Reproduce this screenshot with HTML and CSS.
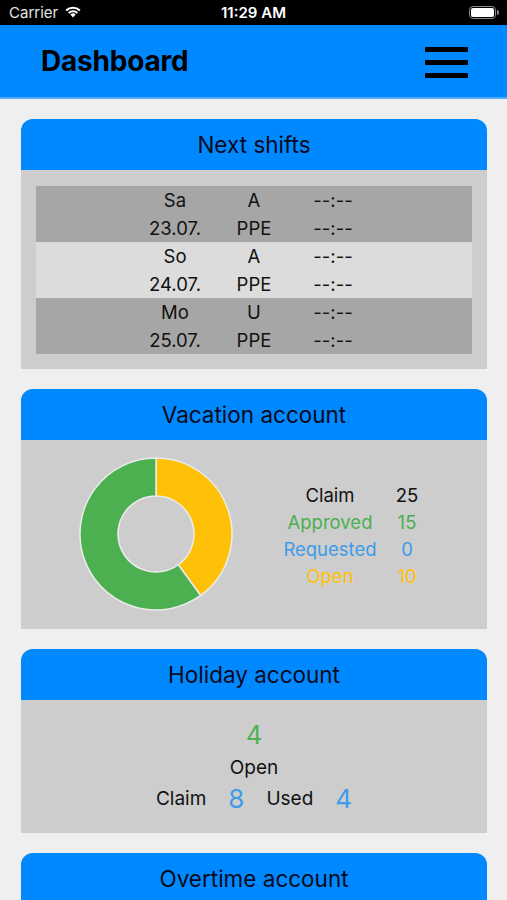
FILE: index.html
```html
<!DOCTYPE html>
<html lang="en">

<head>
    <meta charset="UTF-8">
    <title>Dashboard</title>
    <link rel="stylesheet" href="styles.css">
</head>

<body>

    <div class="status-bar">
        <div class="carrier">
            Carrier
            <svg class="wifi" width="18" height="13" viewBox="0 0 18 13">
                <path d="M9 12.5 L6.3 9.6 A4 4 0 0 1 11.7 9.6 Z" fill="#fff" />
                <path d="M3.9 7.2 A7.4 7.4 0 0 1 14.1 7.2 L12.6 8.7 A5.3 5.3 0 0 0 5.4 8.7 Z" fill="#fff" />
                <path d="M1.4 4.7 A11 11 0 0 1 16.6 4.7 L15.1 6.2 A8.9 8.9 0 0 0 2.9 6.2 Z" fill="#fff" />
            </svg>
        </div>
        <div class="clock">11:29 AM</div>
        <div class="battery">
            <div class="battery-body"><div class="battery-fill"></div></div>
            <div class="battery-tip"></div>
        </div>
    </div>

    <header class="navbar">
        <h1>Dashboard</h1>
        <button class="menu-btn" aria-label="Menu">
            <span></span><span></span><span></span>
        </button>
    </header>

    <main class="content">

        <section class="card">
            <div class="card-title">Next shifts</div>
            <div class="card-body shifts-body">
                <div class="shift dark">
                    <span>Sa</span><span>A</span><span>--:--</span>
                    <span>23.07.</span><span>PPE</span><span>--:--</span>
                </div>
                <div class="shift light">
                    <span>So</span><span>A</span><span>--:--</span>
                    <span>24.07.</span><span>PPE</span><span>--:--</span>
                </div>
                <div class="shift dark">
                    <span>Mo</span><span>U</span><span>--:--</span>
                    <span>25.07.</span><span>PPE</span><span>--:--</span>
                </div>
            </div>
        </section>

        <section class="card">
            <div class="card-title">Vacation account</div>
            <div class="card-body vacation-body">
                <svg class="donut" width="156" height="156" viewBox="-1 -1 156 156">
                    <path class="slice-open" d="M77 1 A76 76 0 0 1 121.67 138.48 L99.34 107.74 A38 38 0 0 0 77 39 Z" />
                    <path class="slice-approved" d="M121.67 138.48 A76 76 0 1 1 77 1 L77 39 A38 38 0 1 0 99.34 107.74 Z" />
                </svg>
                <div class="legend">
                    <span class="claim">Claim</span><span class="claim">25</span>
                    <span class="approved">Approved</span><span class="approved">15</span>
                    <span class="requested">Requested</span><span class="requested">0</span>
                    <span class="open">Open</span><span class="open">10</span>
                </div>
            </div>
        </section>

        <section class="card">
            <div class="card-title">Holiday account</div>
            <div class="card-body holiday-body">
                <div class="holiday-open">4</div>
                <div class="holiday-label">Open</div>
                <div class="holiday-row">
                    <span>Claim</span><span class="big-num">8</span>
                    <span>Used</span><span class="big-num">4</span>
                </div>
            </div>
        </section>

        <section class="card">
            <div class="card-title">Overtime account</div>
            <div class="card-body holiday-body"></div>
        </section>

    </main>

</body>

</html>
```

FILE: styles.css
```css
body {
    margin: 0;
    font-family: Inter, "Noto Sans", sans-serif;
    background: #efefef;
    color: #111;
    width: 507px;
    overflow: hidden;
}

.status-bar {
    height: 25px;
    background: #000;
    color: #fff;
    display: flex;
    align-items: center;
    justify-content: space-between;
    padding: 0 8px 0 9px;
    font-size: 15px;
    position: relative;
}

.carrier {
    display: flex;
    align-items: center;
    gap: 6px;
    color: #e6e6e6;
}

.wifi {
    margin-top: -2px;
}

.clock {
    position: absolute;
    left: 0;
    right: 0;
    text-align: center;
    font-weight: 600;
}

.battery {
    display: flex;
    align-items: center;
}

.battery-body {
    width: 23px;
    height: 9px;
    border: 1.5px solid #8a8a8a;
    border-radius: 4px;
    padding: 1px;
}

.battery-fill {
    width: 100%;
    height: 100%;
    background: #fff;
    border-radius: 2px;
}

.battery-tip {
    width: 2px;
    height: 5px;
    background: #8a8a8a;
    border-radius: 0 2px 2px 0;
    margin-left: 1px;
}

.navbar {
    height: 72px;
    background: #0088ff;
    border-bottom: 2px solid #56acfb;
    display: flex;
    align-items: center;
    justify-content: space-between;
    padding: 0 39px 0 41px;
}

.navbar h1 {
    margin: 0;
    font-size: 28px;
    font-weight: 700;
    color: #000;
    letter-spacing: -0.2px;
}

.menu-btn {
    background: none;
    border: none;
    padding: 0;
    display: flex;
    flex-direction: column;
    gap: 8px;
    cursor: pointer;
    margin-top: 2px;
}

.menu-btn span {
    display: block;
    width: 43px;
    height: 5px;
    background: #000;
    border-radius: 1px;
}

.content {
    padding: 20px 20px 0 21px;
    display: flex;
    flex-direction: column;
    gap: 20px;
}

.card {
    background: #cdcdcd;
    border-radius: 12px 12px 0 0;
    overflow: hidden;
}

.card-title {
    height: 51px;
    background: #0088ff;
    display: flex;
    align-items: center;
    justify-content: center;
    font-size: 22.5px;
    color: #0a0a1a;
}

.shifts-body {
    padding: 16px 15px 15px;
}

.shift {
    display: grid;
    grid-template-columns: 79px 79px 79px;
    justify-content: center;
    grid-auto-rows: 28px;
    align-items: center;
    text-align: center;
    font-size: 18.5px;
}

.shift.dark {
    background: #a6a6a6;
}

.shift.light {
    background: #dcdcdc;
}

.vacation-body {
    display: flex;
    align-items: center;
    padding: 16px 0 17px 57px;
    gap: 46px;
}

.slice-open {
    fill: #ffc107;
    stroke: #ececec;
    stroke-width: 1.5;
}

.slice-approved {
    fill: #4caf50;
    stroke: #ececec;
    stroke-width: 1.5;
}

.legend {
    display: grid;
    grid-template-columns: 100px 54px;
    grid-auto-rows: 27px;
    align-items: center;
    text-align: center;
    font-size: 18.5px;
    margin-top: 3px;
}

.claim {
    color: #111;
}

.approved {
    color: #4caf50;
}

.requested {
    color: #3d9be9;
}

.open {
    color: #ffc107;
}

.holiday-body {
    height: 133px;
    display: flex;
    flex-direction: column;
    align-items: center;
    padding-top: 20px;
    box-sizing: border-box;
}

.holiday-open {
    font-size: 25px;
    color: #4caf50;
    line-height: 30px;
}

.holiday-label {
    font-size: 19px;
    line-height: 26px;
    margin-top: 5px;
}

.holiday-row {
    display: flex;
    align-items: center;
    gap: 22px;
    font-size: 19px;
    line-height: 36px;
}

.big-num {
    font-size: 26px;
    color: #3d9be9;
}
```
